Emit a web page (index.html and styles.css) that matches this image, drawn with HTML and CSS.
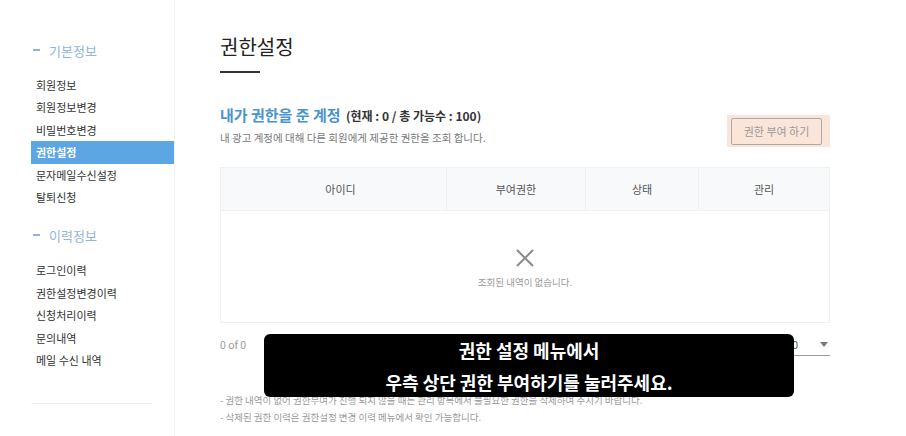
FILE: index.html
```html
<!DOCTYPE html>
<html>
<head>
  <title>권한설정</title>
  <meta charset="UTF-8"/>
  <link rel="stylesheet" href="styles.css">
</head>
<body>
<div class="page">
  <!-- 왼쪽 메뉴 -->
  <aside class="sidebar">
    <div class="nav-title"><span class="dash"></span>기본정보</div>
    <ul class="nav-list">
      <li>회원정보</li>
      <li>회원정보변경</li>
      <li>비밀번호변경</li>
      <li class="active">권한설정</li>
      <li>문자메일수신설정</li>
      <li>탈퇴신청</li>
    </ul>
    <div class="nav-title second"><span class="dash"></span>이력정보</div>
    <ul class="nav-list">
      <li>로그인이력</li>
      <li>권한설정변경이력</li>
      <li>신청처리이력</li>
      <li>문의내역</li>
      <li>메일 수신 내역</li>
    </ul>
    <div class="nav-line"></div>
  </aside>

  <!-- 본문 -->
  <main class="content">
    <h1 class="page-title">권한설정</h1>
    <div class="title-bar"></div>

    <div class="section-head">
      <div>
        <h2 class="section-title">내가 권한을 준 계정 <span class="count">(현재 : 0 / 총 가능수 : 100)</span></h2>
        <p class="section-desc">내 광고 계정에 대해 다른 회원에게 제공한 권한을 조회 합니다.</p>
      </div>
      <div class="btn-spot">
        <button class="grant-btn">권한 부여 하기</button>
      </div>
    </div>

    <div class="table">
      <div class="table-head">
        <div class="col c1">아이디</div>
        <div class="col c2">부여권한</div>
        <div class="col c3">상태</div>
        <div class="col c4">관리</div>
      </div>
      <div class="table-empty">
        <svg width="20" height="20" viewBox="0 0 20 20">
          <path d="M2 2 L18 18 M18 2 L2 18" stroke="#8a8a8a" stroke-width="2" fill="none"/>
        </svg>
        <p>조회된 내역이 없습니다.</p>
      </div>
    </div>

    <div class="pager">
      <span class="pager-count">0 of 0</span>
      <div class="pager-select">
        <span>10</span>
        <svg width="8" height="5" viewBox="0 0 8 5"><path d="M0 0 L8 0 L4 5 Z" fill="#777"/></svg>
      </div>
    </div>

    <ul class="notes">
      <li>- 권한 내역이 없어 권한부여가 진행 되지 않을 때는 관리 항목에서 불필요한 권한을 삭제하여 주시기 바랍니다.</li>
      <li>- 삭제된 권한 이력은 권한설정 변경 이력 메뉴에서 확인 가능합니다.</li>
    </ul>

    <!-- 안내 말풍선 -->
    <div class="guide">
      <p>권한 설정 메뉴에서</p>
      <p>우측 상단 권한 부여하기를 눌러주세요.</p>
    </div>
  </main>
</div>
</body>
</html>
```

FILE: styles.css
```css
* {
  box-sizing: border-box;
}

body {
  font-family: "Noto Sans CJK KR", "Noto Sans", sans-serif;
  margin: 0;
  padding: 0;
  background: #fff;
  color: #333;
  width: 906px;
  height: 436px;
  overflow: hidden;
}

ul {
  list-style: none;
  margin: 0;
  padding: 0;
}

p,
h1,
h2 {
  margin: 0;
}

.page {
  display: flex;
  height: 436px;
}

/* 왼쪽 메뉴 */
.sidebar {
  width: 175px;
  flex-shrink: 0;
  border-right: 1px solid #f0f0f0;
  padding-top: 40px;
}

.nav-title {
  display: flex;
  align-items: center;
  height: 20px;
  margin-left: 33px;
  font-size: 13px;
  color: #8fb6da;
}

.nav-title .dash {
  width: 7px;
  height: 2px;
  background: #8fb6da;
  margin-right: 9px;
}

.nav-title.second {
  margin-top: 17px;
}

.nav-list {
  margin: 14px 0 0 31px;
}

.nav-list li {
  height: 22.4px;
  line-height: 22.4px;
  padding-left: 5px;
  font-size: 11px;
  color: #333;
}

.nav-list li.active {
  background: #5ba6e3;
  color: #fff;
  font-weight: bold;
}

.nav-line {
  margin: 32px 0 0 31px;
  width: 121px;
  height: 1px;
  background: #f0f0f0;
}

/* 본문 */
.content {
  position: relative;
  padding: 33px 0 0 45px;
  width: 656px;
}

.page-title {
  font-size: 20px;
  font-weight: normal;
  line-height: 28px;
  color: #222;
}

.title-bar {
  width: 40px;
  height: 2px;
  background: #333;
  margin-top: 10px;
}

.section-head {
  display: flex;
  justify-content: space-between;
  align-items: flex-start;
  margin-top: 31px;
}

.section-title {
  font-size: 15px;
  font-weight: bold;
  color: #4a93cf;
  line-height: 22px;
}

.section-title .count {
  font-size: 12px;
  color: #333;
  margin-left: 2px;
}

.section-desc {
  font-size: 10.5px;
  color: #777;
  margin-top: 3px;
}

.btn-spot {
  background: #fbe4d8;
  padding: 2px 8px 2px 4px;
  margin-top: 11px;
  margin-right: 1px;
}

.grant-btn {
  font-family: inherit;
  font-size: 11px;
  color: #999;
  background: transparent;
  border: 1px solid #a9a9a9;
  border-radius: 2px;
  width: 91px;
  height: 27px;
  padding: 0;
}

/* 표 */
.table {
  width: 610px;
  margin-top: 20px;
  border: 1px solid #eef0f2;
}

.table-head {
  display: flex;
  height: 43px;
  background: #f8f9fa;
  border-bottom: 1px solid #eef0f2;
}

.table-head .col {
  display: flex;
  align-items: center;
  justify-content: center;
  font-size: 11px;
  color: #555;
  border-right: 1px solid #eef0f2;
}

.table-head .col:last-child {
  border-right: none;
}

.c1 { width: 226px; padding-left: 14px; }
.c2 { width: 139px; }
.c3 { width: 113px; }
.c4 { flex: 1; }

.table-empty {
  height: 111px;
  display: flex;
  flex-direction: column;
  align-items: center;
  padding-top: 37px;
}

.table-empty p {
  font-size: 9.5px;
  color: #999;
  margin-top: 7px;
}

.pager {
  width: 610px;
  display: flex;
  justify-content: space-between;
  align-items: center;
  margin-top: 11px;
}

.pager-count {
  font-size: 10.5px;
  color: #999;
}

.pager-select {
  display: flex;
  align-items: center;
  justify-content: space-between;
  width: 46px;
  height: 22px;
  border-bottom: 1px solid #999;
  font-size: 11px;
  color: #555;
  padding: 0 2px;
}

.notes {
  margin-top: 36px;
}

.notes li {
  font-size: 9.5px;
  color: #999;
  line-height: 17px;
}

/* 안내 말풍선 */
.guide {
  position: absolute;
  left: 89px;
  top: 334px;
  width: 530px;
  height: 63px;
  background: #000;
  border-radius: 6px;
  color: #fff;
  font-size: 18px;
  font-weight: bold;
  text-align: center;
  padding-top: 0;
}

.guide p {
  line-height: 32px;
}
```
